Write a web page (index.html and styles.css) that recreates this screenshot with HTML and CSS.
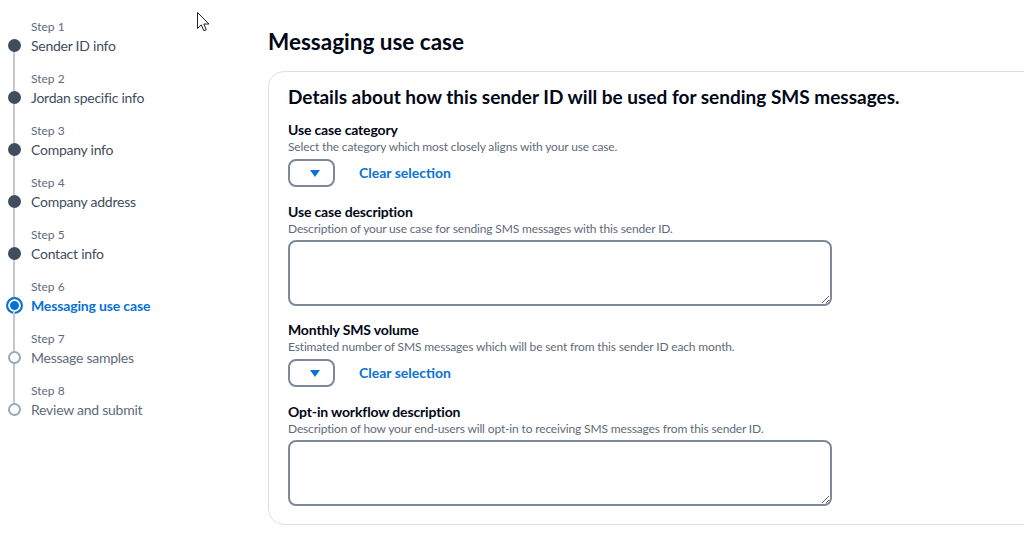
FILE: index.html
```html
<!DOCTYPE html>
<html lang="en">
<head>
<meta charset="utf-8">
<title>Messaging use case</title>
<link rel="stylesheet" href="styles.css">
</head>
<body>
<div class="page">
  <nav class="steps">
    <div class="step done first">
      <div class="ind"><span class="line top"></span><span class="dot"></span><span class="line bottom"></span></div>
      <div class="txt"><div class="num">Step 1</div><div class="title">Sender ID info</div></div>
    </div>
    <div class="step done">
      <div class="ind"><span class="line top"></span><span class="dot"></span><span class="line bottom"></span></div>
      <div class="txt"><div class="num">Step 2</div><div class="title">Jordan specific info</div></div>
    </div>
    <div class="step done">
      <div class="ind"><span class="line top"></span><span class="dot"></span><span class="line bottom"></span></div>
      <div class="txt"><div class="num">Step 3</div><div class="title">Company info</div></div>
    </div>
    <div class="step done">
      <div class="ind"><span class="line top"></span><span class="dot"></span><span class="line bottom"></span></div>
      <div class="txt"><div class="num">Step 4</div><div class="title">Company address</div></div>
    </div>
    <div class="step done">
      <div class="ind"><span class="line top"></span><span class="dot"></span><span class="line bottom"></span></div>
      <div class="txt"><div class="num">Step 5</div><div class="title">Contact info</div></div>
    </div>
    <div class="step active">
      <div class="ind"><span class="line top"></span><span class="dot"></span><span class="line bottom"></span></div>
      <div class="txt"><div class="num">Step 6</div><div class="title">Messaging use case</div></div>
    </div>
    <div class="step todo">
      <div class="ind"><span class="line top"></span><span class="dot"></span><span class="line bottom"></span></div>
      <div class="txt"><div class="num">Step 7</div><div class="title">Message samples</div></div>
    </div>
    <div class="step todo last">
      <div class="ind"><span class="line top"></span><span class="dot"></span><span class="line bottom"></span></div>
      <div class="txt"><div class="num">Step 8</div><div class="title">Review and submit</div></div>
    </div>
  </nav>

  <main class="main">
    <h1 class="page-title">Messaging use case</h1>
    <section class="card">
      <h2 class="card-title">Details about how this sender ID will be used for sending SMS messages.</h2>

      <div class="field">
        <div class="label">Use case category</div>
        <div class="desc">Select the category which most closely aligns with your use case.</div>
        <div class="select-row">
          <div class="select"><span class="caret"></span></div>
          <a class="clear" href="#">Clear selection</a>
        </div>
      </div>

      <div class="field field-area">
        <div class="label">Use case description</div>
        <div class="desc">Description of your use case for sending SMS messages with this sender ID.</div>
        <textarea class="area"></textarea>
      </div>

      <div class="field">
        <div class="label">Monthly SMS volume</div>
        <div class="desc">Estimated number of SMS messages which will be sent from this sender ID each month.</div>
        <div class="select-row">
          <div class="select"><span class="caret"></span></div>
          <a class="clear" href="#">Clear selection</a>
        </div>
      </div>

      <div class="field field-area">
        <div class="label">Opt-in workflow description</div>
        <div class="desc">Description of how your end-users will opt-in to receiving SMS messages from this sender ID.</div>
        <textarea class="area"></textarea>
      </div>
    </section>
  </main>
</div>

<svg class="cursor" width="13" height="20" viewBox="0 0 13 20" aria-hidden="true">
  <path d="M0.5 0.5 L0.5 16.5 L4.3 12.9 L6.9 18.8 L9.3 17.8 L6.8 12 L12 12 Z" fill="#fff" stroke="#222" stroke-width="1" stroke-linejoin="round"/>
</svg>
</body>
</html>
```

FILE: styles.css
```css
html, body {
  margin: 0;
  padding: 0;
  background: #ffffff;
}

body {
  font-family: Lato, "Open Sans", sans-serif;
  color: #000716;
  overflow: hidden;
  width: 1024px;
  height: 543px;
}

.page {
  display: flex;
  align-items: flex-start;
}

/* ---------- steps ---------- */
.steps {
  width: 268px;
  flex: 0 0 268px;
  padding-top: 19px;
  display: flex;
  flex-direction: column;
}

.step {
  display: grid;
  grid-template-columns: 28px 1fr;
  column-gap: 3px;
}

.ind {
  display: flex;
  flex-direction: column;
  align-items: center;
}

.line {
  width: 2px;
  background: #c6c6cd;
}

.line.top {
  height: 20px;
}

.line.bottom {
  flex: 1;
}

.first .line.top,
.last .line.bottom {
  background: transparent;
}

.dot {
  width: 13px;
  height: 13px;
  border-radius: 50%;
  box-sizing: border-box;
  flex: 0 0 auto;
}

.done .dot {
  background: #414d5c;
}

.active .dot {
  width: 17px;
  height: 17px;
  margin: -2px 0;
  border: 2px solid #0972d3;
  background: #0972d3;
  box-shadow: inset 0 0 0 2px #ffffff;
}

.todo .dot {
  width: 13px;
  height: 13px;
  border: 2px solid #9ba7b6;
  background: #ffffff;
}

.txt {
  padding-bottom: 16px;
}

.num {
  font-size: 12px;
  line-height: 16px;
  color: #5f6b7a;
}

.title {
  font-size: 14px;
  line-height: 20px;
  color: #414d5c;
  letter-spacing: -0.25px;
  padding-top: 1px;
  margin-bottom: -1px;
}

.active .title {
  color: #0972d3;
  font-weight: 700;
  letter-spacing: -0.15px;
}

.todo .title {
  color: #5f6b7a;
}

/* ---------- main ---------- */
.main {
  flex: 0 0 790px;
  padding-top: 27px;
}

.page-title {
  margin: 0 0 14px;
  font-size: 22.5px;
  line-height: 30px;
  font-weight: 700;
  color: #000716;
}

.card {
  border: 1px solid #dcdfe3;
  border-radius: 16px;
  padding: 14px 19px 18px;
}

.card-title {
  margin: 0 0 13px;
  font-size: 19px;
  line-height: 22px;
  font-weight: 700;
  color: #000716;
}

.field + .field {
  margin-top: 16px;
}

.field-area + .field {
  margin-top: 15px;
}

.label {
  font-size: 14px;
  line-height: 18px;
  font-weight: 700;
  color: #000716;
  letter-spacing: -0.15px;
}

.desc {
  font-size: 12px;
  line-height: 16px;
  color: #5f6b7a;
  letter-spacing: -0.15px;
}

.select-row {
  margin-top: 4px;
  display: flex;
  align-items: center;
  gap: 24px;
}

.select {
  width: 47px;
  height: 28px;
  box-sizing: border-box;
  border: 2px solid #7d8998;
  border-radius: 8px;
  display: flex;
  align-items: center;
  justify-content: flex-end;
  padding-right: 13px;
}

.caret {
  width: 0;
  height: 0;
  border-left: 5px solid transparent;
  border-right: 5px solid transparent;
  border-top: 7px solid #0972d3;
}

.clear {
  font-size: 14px;
  line-height: 20px;
  font-weight: 700;
  color: #0972d3;
  text-decoration: none;
}

.area {
  display: block;
  margin-top: 3px;
  width: 544px;
  height: 66px;
  box-sizing: border-box;
  border: 2px solid #7d8998;
  border-radius: 8px;
  background: #ffffff;
  font-family: inherit;
  font-size: 14px;
}

.cursor {
  position: absolute;
  left: 197px;
  top: 12px;
}
```
